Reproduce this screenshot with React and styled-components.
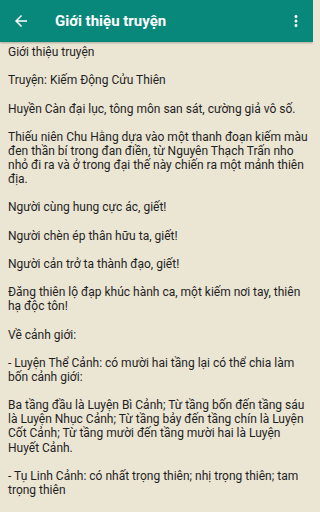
import React from "react";
import styled, { createGlobalStyle } from "styled-components";

const GlobalStyle = createGlobalStyle`
  html, body {
    margin: 0;
    padding: 0;
    background: #ebe5d4;
  }
  body {
    font-family: Roboto, "Liberation Sans", sans-serif;
  }
`;

const Screen = styled.div`
  width: 313px;
  height: 512px;
  overflow: hidden;
  background: #ebe5d4;
  display: flex;
  flex-direction: column;
`;

const Toolbar = styled.header`
  height: 42px;
  flex: none;
  background: #07887a;
  display: flex;
  align-items: center;
  box-shadow: 0 1px 2px rgba(0, 0, 0, 0.28);
  position: relative;
  z-index: 1;
`;

const IconButton = styled.button`
  width: ${(p) => p.$w || 42}px;
  height: 42px;
  border: 0;
  padding: 0;
  background: transparent;
  display: flex;
  align-items: center;
  justify-content: center;
  color: #fff;
`;

const Title = styled.h1`
  flex: 1;
  margin: 0 0 0 13px;
  color: #fff;
  font-size: 15px;
  font-weight: 700;
  letter-spacing: 0;
`;

const Content = styled.main`
  flex: 1;
  padding: 3px 4px 0 8px;
  color: #1f1f1f;
  font-size: 12px;
  line-height: 14.13px;
`;

const Para = styled.p`
  margin: 0 0 14.13px;
`;

const BackIcon = () => (
  <svg width="18" height="18" viewBox="0 0 24 24" fill="#fff">
    <path d="M20 11H7.83l5.59-5.59L12 4l-8 8 8 8 1.41-1.41L7.83 13H20v-2z" />
  </svg>
);

const MoreIcon = () => (
  <svg width="18" height="18" viewBox="0 0 24 24" fill="#fff">
    <path d="M12 8c1.1 0 2-.9 2-2s-.9-2-2-2-2 .9-2 2 .9 2 2 2zm0 2c-1.1 0-2 .9-2 2s.9 2 2 2 2-.9 2-2-.9-2-2-2zm0 6c-1.1 0-2 .9-2 2s.9 2 2 2 2-.9 2-2-.9-2-2-2z" />
  </svg>
);

const paragraphs = [
  "Giới thiệu truyện",
  "Truyện: Kiếm Động Cửu Thiên",
  "Huyền Càn đại lục, tông môn san sát, cường giả vô số.",
  "Thiếu niên Chu Hằng dựa vào một thanh đoạn kiếm màu đen thần bí trong đan điền, từ Nguyên Thạch Trấn nho nhỏ đi ra và ở trong đại thế này chiến ra một mảnh thiên địa.",
  "Người cùng hung cực ác, giết!",
  "Người chèn ép thân hữu ta, giết!",
  "Người cản trở ta thành đạo, giết!",
  "Đăng thiên lộ đạp khúc hành ca, một kiếm nơi tay, thiên hạ độc tôn!",
  "Về cảnh giới:",
  "- Luyện Thể Cảnh: có mười hai tầng lại có thể chia làm bốn cảnh giới:",
  "Ba tầng đầu là Luyện Bì Cảnh; Từ tầng bốn đến tầng sáu là Luyện Nhục Cảnh; Từ tầng bảy đến tầng chín là Luyện Cốt Cảnh; Từ tầng mười đến tầng mười hai là Luyện Huyết Cảnh.",
  "- Tụ Linh Cảnh: có nhất trọng thiên; nhị trọng thiên; tam trọng thiên",
];

export default function App() {
  return (
    <>
      <GlobalStyle />
      <Screen>
        <Toolbar>
          <IconButton $w={42}>
            <BackIcon />
          </IconButton>
          <Title>Giới thiệu truyện</Title>
          <IconButton $w={34}>
            <MoreIcon />
          </IconButton>
        </Toolbar>
        <Content>
          {paragraphs.map((text, i) => (
            <Para key={i}>{text}</Para>
          ))}
        </Content>
      </Screen>
    </>
  );
}
